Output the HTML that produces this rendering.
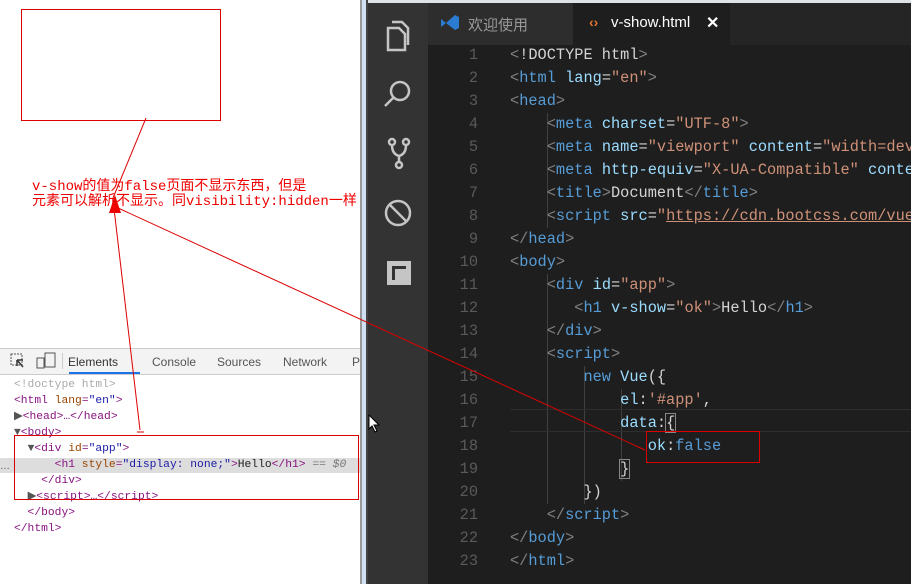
<!DOCTYPE html>
<html><head><meta charset="utf-8"><style>
body{margin:0;width:911px;height:584px;overflow:hidden;position:relative;background:#fff;font-family:"Liberation Sans","Noto Sans CJK SC",sans-serif}
.abs{position:absolute}
.code{font-family:"Liberation Mono",monospace;font-size:15.3px;white-space:pre;line-height:23px}
.dt{font-family:"Liberation Mono",monospace;font-size:11.3px;white-space:pre;line-height:16px;color:#881280}
.t{color:#808080}.tg{color:#569cd6}.at{color:#9cdcfe}.s{color:#ce9178}.w{color:#d4d4d4}
.da{color:#994500}.dv{color:#1a1aa6}.dk{color:#222}
</style></head><body>
<div class="abs" style="left:0;top:348px;width:360px;height:1px;background:#ccc"></div>
<div class="abs" style="left:0;top:349px;width:360px;height:25px;background:#f3f3f3;border-bottom:1px solid #ccc"></div>
<svg class="abs" style="left:8px;top:352px" width="50" height="18"><rect x="3" y="2" width="11" height="11" fill="none" stroke="#555" stroke-dasharray="2,1"/><path d="M9 8 L15 15 M9 8 l0 6 M9 8 l6 0" stroke="#333" stroke-width="1.5"/><rect x="37" y="1" width="10" height="14" fill="none" stroke="#555"/><rect x="29" y="6" width="7" height="10" fill="none" stroke="#555"/></svg>
<div class="abs" style="left:62px;top:353px;width:1px;height:16px;background:#ccc"></div>
<div class="abs" style="left:68px;top:355px;font-size:12px;color:#333">Elements</div>
<div class="abs" style="left:69px;top:372px;width:71px;height:2px;background:#1a73e8"></div>
<div class="abs" style="left:152px;top:355px;font-size:12px;color:#555">Console</div>
<div class="abs" style="left:217px;top:355px;font-size:12px;color:#555">Sources</div>
<div class="abs" style="left:283px;top:355px;font-size:12px;color:#555">Network</div>
<div class="abs" style="left:352px;top:355px;font-size:12px;color:#555">Pe</div>
<div class="abs" style="left:0;top:458px;width:360px;height:15px;background:#ddd"></div>
<div class="abs dt" style="left:14px;top:377px"><span style="color:#aaa">&lt;!doctype html&gt;</span>
&lt;html <span class="da">lang</span>=<span class="dv">"en"</span>&gt;
<span style="color:#555">▶</span>&lt;head&gt;…&lt;/head&gt;
<span style="color:#555">▼</span>&lt;body&gt;
  <span style="color:#555">▼</span>&lt;div <span class="da">id</span>=<span class="dv">"app"</span>&gt;
      &lt;h1 <span class="da">style</span>=<span class="dv">"display: none;"</span>&gt;<span class="dk">Hello</span>&lt;/h1&gt; <span style="color:#777">== <i>$0</i></span>
    &lt;/div&gt;
  <span style="color:#555">▶</span>&lt;script&gt;…&lt;/script&gt;
  &lt;/body&gt;
&lt;/html&gt;</div>
<div class="abs" style="left:0;top:461px;font-size:10px;color:#555">…</div>
<div class="abs" style="left:360px;top:0;width:2px;height:584px;background:#999"></div>
<div class="abs" style="left:362px;top:0;width:4px;height:584px;background:#cfe0f3"></div>
<div class="abs" style="left:366px;top:0;width:2px;height:584px;background:#444"></div>
<div class="abs" style="left:368px;top:0;width:543px;height:584px;background:#1e1e1e"></div>
<div class="abs" style="left:368px;top:0;width:543px;height:3px;background:#dfe3e8"></div>
<div class="abs" style="left:368px;top:3px;width:60px;height:581px;background:#333"></div>
<div class="abs" style="left:428px;top:3px;width:483px;height:42px;background:#252526"></div>
<div class="abs" style="left:428px;top:3px;width:145px;height:42px;background:#2d2d2d"></div>
<div class="abs" style="left:573px;top:3px;width:157px;height:42px;background:#1e1e1e"></div>
<svg class="abs" style="left:440px;top:14px" width="20" height="16"><path d="M1 5 L6 9 L1 13 Z M6 9 L15 1 L19 3 L19 14 L15 16 Z" fill="#2b7bd1"/></svg>
<div class="abs" style="left:468px;top:14px;font-size:15px;color:#999">欢迎使用</div>
<div class="abs" style="left:589px;top:14px;font-size:14px;color:#e37933;font-weight:bold">‹›</div>
<div class="abs" style="left:611px;top:14px;font-size:15px;color:#fff">v-show.html</div>
<div class="abs" style="left:706px;top:13px;font-size:16px;color:#fff;font-weight:bold">✕</div>
<svg class="abs" style="left:368px;top:3px" width="60" height="300" fill="none" stroke="#c5c5c5" stroke-width="2.5">
<path d="M20 25 h11 l6 6 v16 h-17z M24 19 h10 l6 6 v17"/>
<circle cx="32" cy="88" r="9"/><path d="M25 95 l-8 8"/>
<circle cx="24" cy="139" r="3"/><circle cx="38" cy="139" r="3"/><circle cx="31" cy="162" r="3"/><path d="M24 142 q0 9 7 11 q7 -2 7 -11 M31 153 v6"/>
<circle cx="30" cy="210" r="12"/><path d="M22 202 l16 16"/>
<rect x="19" y="258" width="24" height="24" fill="#c5c5c5" stroke="none"/><rect x="24" y="263" width="14" height="14" fill="#333" stroke="none"/><rect x="27" y="266" width="11" height="11" fill="#c5c5c5" stroke="none"/>
</svg>
<div class="abs" style="left:547px;top:113px;width:1px;height:115px;background:#404040"></div>
<div class="abs" style="left:547px;top:274px;width:1px;height:230px;background:#404040"></div>
<div class="abs" style="left:584px;top:366px;width:1px;height:138px;background:#404040"></div>
<div class="abs" style="left:621px;top:389px;width:1px;height:92px;background:#404040"></div>
<div class="abs" style="left:621px;top:435px;width:1px;height:23px;background:#404040"></div>
<div class="abs" style="left:510px;top:409px;width:401px;height:23px;border-top:1px solid #2e2e2e;border-bottom:1px solid #2e2e2e;box-sizing:border-box"></div>
<div class="abs code" style="left:440px;top:44px;width:38px;text-align:right;color:#5a5a5a">1
2
3
4
5
6
7
8
9
10
11
12
13
14
15
16
17
18
19
20
21
22
23</div>
<div class="abs code w" style="left:510px;top:44px"><span class="t">&lt;</span>!DOCTYPE html<span class="t">&gt;</span>
<span class="t">&lt;</span><span class="tg">html</span> <span class="at">lang</span>=<span class="s">"en"</span><span class="t">&gt;</span>
<span class="t">&lt;</span><span class="tg">head</span><span class="t">&gt;</span>
    <span class="t">&lt;</span><span class="tg">meta</span> <span class="at">charset</span>=<span class="s">"UTF-8"</span><span class="t">&gt;</span>
    <span class="t">&lt;</span><span class="tg">meta</span> <span class="at">name</span>=<span class="s">"viewport"</span> <span class="at">content</span>=<span class="s">"width=dev</span>
    <span class="t">&lt;</span><span class="tg">meta</span> <span class="at">http-equiv</span>=<span class="s">"X-UA-Compatible"</span> <span class="at">conte</span>
    <span class="t">&lt;</span><span class="tg">title</span><span class="t">&gt;</span>Document<span class="t">&lt;/</span><span class="tg">title</span><span class="t">&gt;</span>
    <span class="t">&lt;</span><span class="tg">script</span> <span class="at">src</span>=<span class="s">"<u>https://cdn.bootcss.com/vue</u></span>
<span class="t">&lt;/</span><span class="tg">head</span><span class="t">&gt;</span>
<span class="t">&lt;</span><span class="tg">body</span><span class="t">&gt;</span>
    <span class="t">&lt;</span><span class="tg">div</span> <span class="at">id</span>=<span class="s">"app"</span><span class="t">&gt;</span>
       <span class="t">&lt;</span><span class="tg">h1</span> <span class="at">v-show</span>=<span class="s">"ok"</span><span class="t">&gt;</span>Hello<span class="t">&lt;/</span><span class="tg">h1</span><span class="t">&gt;</span>
    <span class="t">&lt;/</span><span class="tg">div</span><span class="t">&gt;</span>
    <span class="t">&lt;</span><span class="tg">script</span><span class="t">&gt;</span>
        <span class="tg">new</span> <span class="at">Vue</span>({
            <span class="at">el</span>:<span class="s">'#app'</span>,
            <span class="at">data</span>:<span style="outline:1px solid #888">{</span>
               <span class="at">ok</span>:<span class="tg">false</span>
            <span style="outline:1px solid #888">}</span>
        })
    <span class="t">&lt;/</span><span class="tg">script</span><span class="t">&gt;</span>
<span class="t">&lt;/</span><span class="tg">body</span><span class="t">&gt;</span>
<span class="t">&lt;/</span><span class="tg">html</span><span class="t">&gt;</span></div>
<svg class="abs" style="left:368px;top:414px" width="14" height="20"><path d="M1 1 L1 15 L4 12 L7 18 L9 17 L6 11 L11 11 Z" fill="#fff" stroke="#000"/></svg>
<svg class="abs" style="left:0;top:0" width="911" height="584">
<rect x="21.5" y="9.5" width="199" height="111" fill="none" stroke="#d00" stroke-width="1"/>
<rect x="14.5" y="435.5" width="344" height="64" fill="none" stroke="#d00" stroke-width="1"/>
<rect x="646.5" y="431.5" width="113" height="31" fill="none" stroke="#d00" stroke-width="1"/>
<path d="M146 118 L113 198 M113 200 L140 430 M137 432 h7 M118 208 L645 450" stroke="#d00" stroke-width="1" fill="none"/>
<path d="M115 195 L109 213 L121 213 Z" fill="#e00"/>
</svg>
<div class="abs" style="left:32px;top:180px;font-family:'Liberation Mono','Noto Sans CJK SC',monospace;font-size:14px;line-height:15px;color:#e00;white-space:pre">v-show的值为false页面不显示东西，但是
元素可以解析不显示。同visibility:hidden一样</div>
</body></html>
